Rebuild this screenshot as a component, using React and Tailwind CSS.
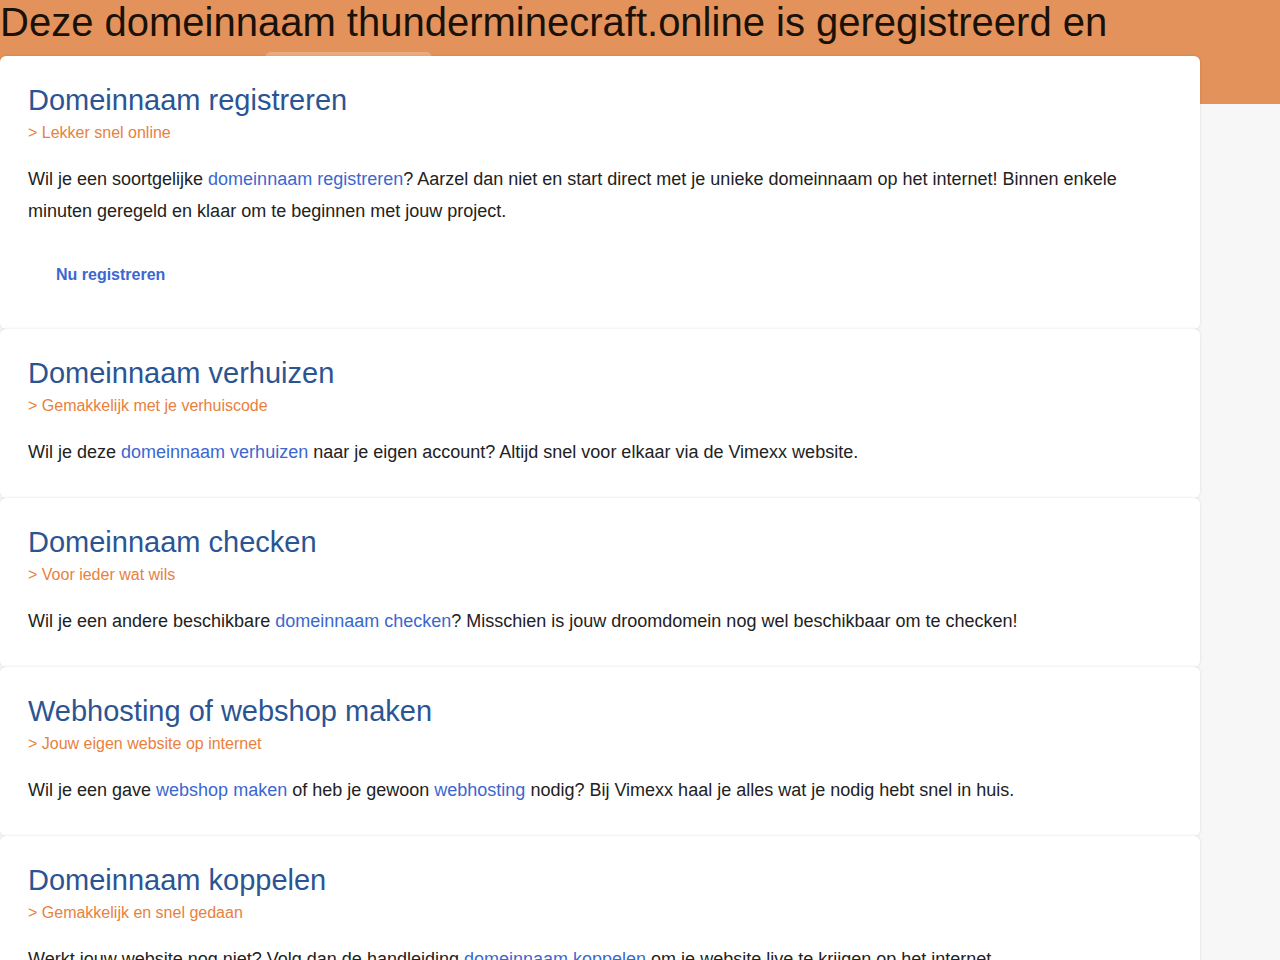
import React from 'react';

const sections = [
  {
    title: 'Domeinnaam registreren',
    sub: 'Lekker snel online',
    body: (
      <>
        Wil je een soortgelijke <a className="text-[#3b67d0]">domeinnaam registreren</a>? Aarzel dan niet en start direct met je unieke domeinnaam op het internet! Binnen enkele minuten geregeld en klaar om te beginnen met jouw project.
      </>
    ),
    button: 'Nu registreren',
  },
  {
    title: 'Domeinnaam verhuizen',
    sub: 'Gemakkelijk met je verhuiscode',
    body: (
      <>
        Wil je deze <a className="text-[#3b67d0]">domeinnaam verhuizen</a> naar je eigen account? Altijd snel voor elkaar via de Vimexx website.
      </>
    ),
  },
  {
    title: 'Domeinnaam checken',
    sub: 'Voor ieder wat wils',
    body: (
      <>
        Wil je een andere beschikbare <a className="text-[#3b67d0]">domeinnaam checken</a>? Misschien is jouw droomdomein nog wel beschikbaar om te checken!
      </>
    ),
  },
  {
    title: 'Webhosting of webshop maken',
    sub: 'Jouw eigen website op internet',
    body: (
      <>
        Wil je een gave <a className="text-[#3b67d0]">webshop maken</a> of heb je gewoon <a className="text-[#3b67d0]">webhosting</a> nodig? Bij Vimexx haal je alles wat je nodig hebt snel in huis.
      </>
    ),
  },
  {
    title: 'Domeinnaam koppelen',
    sub: 'Gemakkelijk en snel gedaan',
    body: (
      <>
        Werkt jouw website nog niet? Volg dan de handleiding <a className="text-[#3b67d0]">domeinnaam koppelen</a> om je website live te krijgen op het internet.
      </>
    ),
  },
];

function Card({ s }) {
  return (
    <section
      className={
        'bg-white rounded-md shadow-[0_0_3px_rgba(0,0,0,0.12)] pl-7 pr-7 pt-[27px] ' +
        (s.button ? 'pb-7' : 'pb-[30px]')
      }
    >
      <h2 className="text-[29px] leading-[34px] text-[#2b5592] mb-[6px]">{s.title}</h2>
      <p className="text-base leading-5 text-[#e8813e]">&gt; {s.sub}</p>
      <p className="mt-5 text-lg leading-8 text-[#222]">{s.body}</p>
      {s.button && (
        <button className="mt-[22px] px-7 py-4 text-base leading-5 font-bold text-[#3b67d0]">{s.button}</button>
      )}
    </section>
  );
}

export default function App() {
  return (
    <div className="min-h-screen bg-[#f7f7f7] font-['Liberation_Sans',Arial,sans-serif] overflow-hidden">
      <header className="bg-[#e3925b] h-[104px] overflow-hidden">
        <h1 className="text-[40px] leading-[44px] text-[#1a1109] whitespace-nowrap">
          Deze domeinnaam thunderminecraft.online is geregistreerd en
        </h1>
        <div className="pl-[265px] pt-[8px]">
          <div className="w-[167px] h-10 rounded-md bg-white/25"></div>
        </div>
      </header>
      <main className="relative w-[1200px] -mt-[48px] flex flex-col">
        {sections.map((s) => (
          <Card key={s.title} s={s} />
        ))}
      </main>
    </div>
  );
}
